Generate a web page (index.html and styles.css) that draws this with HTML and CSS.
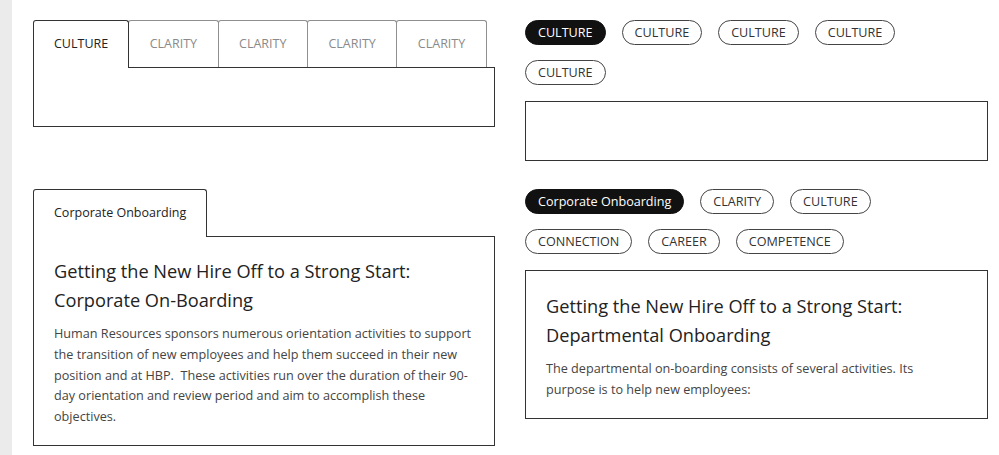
FILE: index.html
```html
<!DOCTYPE html>
<html lang="en">
<head>
<meta charset="utf-8">
<title>Onboarding</title>
<link rel="stylesheet" href="styles.css">
</head>
<body>
<div class="page">
  <aside class="rail"></aside>
  <main class="main">
    <section class="tabs">
      <div class="tablist">
        <div class="tab active">CULTURE</div>
        <div class="tab">CLARITY</div>
        <div class="tab">CLARITY</div>
        <div class="tab">CLARITY</div>
        <div class="tab">CLARITY</div>
      </div>
      <div class="panel empty"></div>
    </section>

    <section class="pills-widget">
      <div class="pills">
        <span class="pill on">CULTURE</span>
        <span class="pill">CULTURE</span>
        <span class="pill">CULTURE</span>
        <span class="pill">CULTURE</span>
        <span class="pill">CULTURE</span>
      </div>
      <div class="box empty"></div>
    </section>

    <section class="tabs">
      <div class="tablist">
        <div class="tab active">Corporate Onboarding</div>
      </div>
      <div class="panel">
        <h2 class="title">Getting the New Hire Off to a Strong Start: Corporate On-Boarding</h2>
        <p class="text">Human Resources sponsors numerous orientation activities to support the transition of new employees and help them succeed in their new position and at HBP.&nbsp; These activities run over the duration of their 90-day orientation and review period and aim to accomplish these objectives.</p>
      </div>
    </section>

    <section class="pills-widget">
      <div class="pills">
        <span class="pill on">Corporate Onboarding</span>
        <span class="pill">CLARITY</span>
        <span class="pill">CULTURE</span>
        <span class="pill">CONNECTION</span>
        <span class="pill">CAREER</span>
        <span class="pill">COMPETENCE</span>
      </div>
      <div class="box">
        <h2 class="title">Getting the New Hire Off to a Strong Start: Departmental Onboarding</h2>
        <p class="text">The departmental on-boarding consists of several activities. Its purpose is to help new employees:</p>
      </div>
    </section>
  </main>
</div>
</body>
</html>
```

FILE: styles.css
```css
* { box-sizing: border-box; }
html, body { margin: 0; padding: 0; background: #fff; }
body {
  font-family: "Open Sans", "Noto Sans", sans-serif;
  color: #333;
  height: 455px;
  overflow: hidden;
}
.page { display: flex; min-height: 455px; }
.rail { width: 12px; flex: none; background: #ebebeb; }
.main {
  flex: 1;
  padding: 20px 11px 0 21px;
  display: grid;
  grid-template-columns: 462px 463px;
  column-gap: 30px;
  row-gap: 28px;
  align-items: start;
  align-content: start;
}

/* tabs */
.tablist { display: flex; position: relative; z-index: 1; }
.tab {
  height: 47px;
  line-height: 46px;
  padding: 0 20.5px;
  font-size: 12.5px;
  color: #8a8a8a;
  border: 1px solid #8f8f8f;
  border-bottom: none;
  border-radius: 3px 3px 0 0;
  margin-left: -1px;
  margin-bottom: -1px;
  background: #fff;
}
.tab:first-child { margin-left: 0; }
.tab.active {
  padding: 0 20px;
  color: #222;
  border-color: #333;
  height: 48px;
  position: relative;
  z-index: 2;
}
.panel {
  border: 1px solid #333;
  min-height: 60px;
  padding: 20px 20px 18px;
}
.panel.empty { padding: 0; }

/* pills */
.pills {
  display: flex;
  flex-wrap: wrap;
  row-gap: 15px;
  margin-bottom: 16px;
}
.pill {
  height: 25px;
  line-height: 23px;
  padding: 0 12px;
  margin-right: 16px;
  font-size: 12.6px;
  color: #333;
  border: 1px solid #444;
  border-radius: 13px;
}
.pill.on { background: #111; border-color: #111; color: #fff; }
.box {
  border: 1px solid #333;
  min-height: 60px;
  padding: 21px 25px 18px 20px;
}
.box.empty { padding: 0; }

.title {
  margin: 0 0 8px;
  font-size: 18.2px;
  font-weight: 400;
  line-height: 29px;
  color: #222;
}
.text {
  margin: 0;
  font-size: 12.65px;
  line-height: 20.8px;
  color: #444;
}
```
